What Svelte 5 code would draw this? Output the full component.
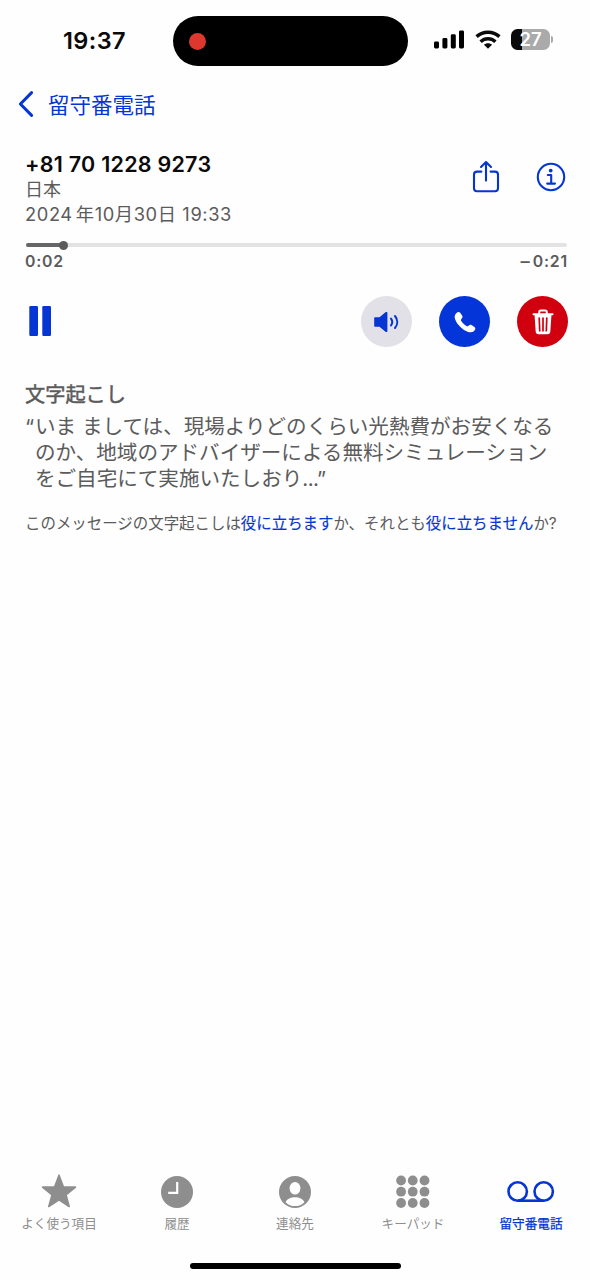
<script lang="ts">
	let elapsed = $state(2);
	let duration = $state(23);
	let playing = $state(true);
	let activeTab = $state('voicemail');

	const tabs = [
		{ id: 'favorites', label: 'よく使う項目' },
		{ id: 'recents', label: '履歴' },
		{ id: 'contacts', label: '連絡先' },
		{ id: 'keypad', label: 'キーパッド' },
		{ id: 'voicemail', label: '留守番電話' }
	];

	const dots = [4.5, 15.7, 27];

	function format(seconds: number) {
		return `${Math.floor(seconds / 60)}:${String(seconds % 60).padStart(2, '0')}`;
	}

	let progress = $derived((elapsed / duration) * 80.5);
</script>

<div class="phone">
	<header class="status">
		<div class="clock">19:37</div>
		<div class="island"><span class="rec"></span></div>
		<div class="indicators">
			<svg class="signal" width="30" height="19" viewBox="0 0 30 19">
				<rect x="0" y="11.5" width="5" height="7" rx="1.4" />
				<rect x="8.4" y="8" width="5" height="10.5" rx="1.4" />
				<rect x="16.8" y="4.3" width="5" height="14.2" rx="1.4" />
				<rect x="25" y="0.4" width="5" height="18.1" rx="1.4" />
			</svg>
			<svg class="wifi" width="26" height="19" viewBox="0 0 26 19">
				<path d="M1.6 6.6C8 .7 18 .7 24.4 6.6" />
				<path d="M5.6 11.7c4.3-3.9 10.5-3.9 14.8 0" />
				<path class="fill" d="M13 18.8l-4-4.1c2.2-2 5.8-2 8 0z" />
			</svg>
			<div class="battery"><span>27</span></div>
			<div class="nub"></div>
		</div>
	</header>

	<nav class="back">
		<svg width="16" height="28" viewBox="0 0 16 28">
			<path d="M13.6 2.6L2.4 14l11.2 11.4" />
		</svg>
		<span>留守番電話</span>
	</nav>

	<main>
		<section class="caller">
			<div class="who">
				<h1>+81 70 1228 9273</h1>
				<p class="region">日本</p>
				<p class="date">2024<i></i>年10月30日 19:33</p>
			</div>
			<div class="links">
				<svg width="28" height="34" viewBox="0 0 28 34">
					<path d="M9.4 11.6H5a3 3 0 0 0-3 3v13.6a3 3 0 0 0 3 3h18a3 3 0 0 0 3-3V14.6a3 3 0 0 0-3-3h-4.4" />
					<path d="M14 20.6V2.2M9 7l5-5 5 5" />
				</svg>
				<svg width="30" height="30" viewBox="0 0 30 30">
					<circle cx="15" cy="15" r="13.2" />
					<circle class="dot" cx="14.7" cy="8.6" r="1.9" />
					<path d="M11.8 13h3.4v8.4M11.2 21.6h7.8" />
				</svg>
			</div>
		</section>

		<div class="slider">
			<div class="played" style:width="{progress}%"></div>
			<div class="knob"></div>
		</div>
		<div class="times">
			<span>{format(elapsed)}</span>
			<span><span class="minus">−</span>{format(duration - elapsed)}</span>
		</div>

		<section class="controls">
			<button class="pause" aria-label="一時停止" onclick={() => (playing = !playing)}>
				<svg width="23" height="30" viewBox="0 0 23 30">
					{#if playing}
						<rect x="0.3" width="8.7" height="30" rx="1.2" />
						<rect x="13.3" width="8.7" height="30" rx="1.2" />
					{:else}
						<path d="M0 0l23 15L0 30z" />
					{/if}
				</svg>
			</button>
			<button class="round speaker" aria-label="スピーカー">
				<svg width="26" height="22" viewBox="0 0 26 22">
					<path class="fill" d="M1.3 6.3h4.2l6-5c.8-.7 1.9-.3 1.9.7v18c0 1-1.1 1.400-1.900.7l-6-5H1.300C.6 15.700.2 15.300.2 14.700V7.300c0-.6.4-1 1.100-1z" />
					<path d="M17 7.600c1.500 2 1.500 4.800 0 6.800M21 5c3 3.600 3 8.400 0 12" />
				</svg>
			</button>
			<button class="round call" aria-label="発信">
				<svg width="22" height="22" viewBox="0 0 22 22">
					<path d="M1.600 2.900C3 .9 5 .2 6.200 1.800l1.900 2.800c.8 1.300.5 2.100-.7 3.400-.6.700-.6 1.200-.1 2 1.300 2.100 3 3.700 5.200 5 .8.500 1.300.4 2-.2 1.200-1.100 2.200-1.300 3.400-.5l2.600 1.800c1.500 1.100 1 2.800-.7 4.200-1.900 1.500-5 1.300-8.900-.9C6.700 17 2.800 12.700 1.200 8.500.4 6.300.5 4.400 1.600 2.900z" />
				</svg>
			</button>
			<button class="round trash" aria-label="削除">
				<svg width="22" height="26" viewBox="0 0 22 26">
					<path class="lid" d="M1.500 5.200h19M7.200 5V3.200c0-1 .6-1.600 1.600-1.600h4.400c1 0 1.600.6 1.600 1.600V5" />
					<path class="bin" d="M2.500 5.500h17l-1.200 17.200c-.1 1.500-1.100 2.500-2.600 2.500H6.300c-1.500 0-2.500-1-2.600-2.500z" />
					<path class="slots" d="M7.200 9l.5 12.800M11 9v12.800M14.800 9l-.5 12.800" />
				</svg>
			</button>
		</section>

		<section class="transcript">
			<h2>文字起こし</h2>
			<div class="quote">
				<span class="open">“</span>
				<p>
					いま ましては、現場よりどのくらい光熱費がお安くなる<br />
					のか、地域のアドバイザーによる無料シミュレーション<br />
					をご自宅にて実施いたしおり<span class="end">...”</span>
				</p>
			</div>
			<p class="feedback">このメッセージの文字起こしは<a href="#yes">役に立ちます</a>か、それとも<a href="#no">役に立ちません</a>か?</p>
		</section>
	</main>

	<footer>
		{#each tabs as tab (tab.id)}
			<button class="tab" class:active={tab.id === activeTab} onclick={() => (activeTab = tab.id)}>
				<svg width="48" height="36" viewBox="0 0 48 36">
					{#if tab.id === 'favorites'}
						<path class="star" d="M24 1.2l4.35 11.700 12.100.25-9.400 7.850 3.100 11.500L24 25.900l-10.200 6.600 3.200-11.500-9.450-7.850 12.100-.25z" />
					{:else if tab.id === 'recents'}
						<circle cx="24" cy="18" r="16" />
						<path class="hands" d="M24.200 8v10.800h-9" />
					{:else if tab.id === 'contacts'}
						<circle cx="24" cy="18" r="16" />
						<ellipse class="cut" cx="24" cy="14.300" rx="5.400" ry="6.300" />
						<path class="cut" d="M14.600 28.200c1.400-3.400 5-5 9.400-5s8 1.600 9.400 5c-2.500 2.600-5.700 3.900-9.400 3.900s-6.900-1.300-9.400-3.900z" />
					{:else if tab.id === 'keypad'}
						{#each dots as y}
							{#each dots as x}
								<circle cx={x * 1.04 + 7.4} cy={y + 2} r="4.9" />
							{/each}
						{/each}
					{:else}
						<g class="reels">
							<circle cx="10.7" cy="17.5" r="9.2" />
							<circle cx="36.7" cy="17.5" r="9.2" />
							<path d="M10.7 26.7h26" />
						</g>
					{/if}
				</svg>
				<span>{tab.label}</span>
			</button>
		{/each}
	</footer>
	<div class="home"></div>
</div>

<style>
	:global(body) {
		background: #fefefe;
	}

	.phone {
		--blue: #0535d2;
		--gray: #5b5b5b;
		display: flex;
		flex-direction: column;
		box-sizing: border-box;
		width: 590px;
		height: 1280px;
		overflow: hidden;
		background: #fefefe;
		color: #0a0a0a;
		font-family: Inter, 'Noto Sans CJK JP', sans-serif;
	}

	h1,
	h2,
	p {
		margin: 0;
		white-space: nowrap;
	}

	svg {
		display: block;
		flex: none;
	}

	button {
		padding: 0;
		border: 0;
		background: none;
		font: inherit;
	}

	.status {
		display: flex;
		align-items: center;
		height: 50px;
		padding-top: 16px;
	}

	.clock {
		width: 110px;
		padding: 0 0 1px 63px;
		font-size: 23.5px;
		font-weight: 600;
		letter-spacing: 0.4px;
	}

	.island {
		display: flex;
		align-items: center;
		width: 219px;
		height: 50px;
		padding-left: 16px;
		border-radius: 25px;
		background: #000;
	}

	.rec {
		width: 17px;
		height: 17px;
		border-radius: 50%;
		background: #dc382e;
	}

	.indicators {
		display: flex;
		align-items: center;
		padding: 0 0 3px 26px;
	}

	.wifi {
		margin-left: 11px;
		fill: none;
		stroke: #0a0a0a;
		stroke-width: 3.5;
	}

	.wifi .fill {
		fill: #0a0a0a;
		stroke: none;
	}

	.battery {
		width: 39px;
		height: 21px;
		margin-left: 10px;
		border-radius: 6.5px;
		background: linear-gradient(90deg, #0a0a0a 27%, #aaa 27%);
		color: #fff;
		font-size: 18.5px;
		font-weight: 600;
		line-height: 21px;
		text-align: center;
	}

	.nub {
		width: 2px;
		height: 7px;
		margin-left: 1px;
		border-radius: 0 2px 2px 0;
		background: #aaa;
	}

	.back {
		display: flex;
		align-items: center;
		height: 76px;
		padding-left: 18px;
		color: var(--blue);
		font-size: 21.5px;
	}

	.back svg {
		margin-right: 14px;
		fill: none;
		stroke: var(--blue);
		stroke-width: 3;
		stroke-linecap: round;
		stroke-linejoin: round;
	}

	.back span {
		padding-bottom: 2px;
	}

	main {
		flex: 1;
		padding: 9px 22px 0 25px;
		color: var(--gray);
	}

	.caller {
		display: flex;
		justify-content: space-between;
	}

	h1 {
		height: 26px;
		color: #0a0a0a;
		font-size: 21.5px;
		font-weight: 600;
		line-height: 26px;
		letter-spacing: 0.25px;
	}

	.region {
		font-size: 18px;
		line-height: 25px;
	}

	.date {
		font-size: 18.3px;
		line-height: 24px;
		letter-spacing: 0.6px;
	}

	.date i {
		display: inline-block;
		width: 3px;
	}

	.links {
		display: flex;
		gap: 36px;
		padding: 9px 2px 0 0;
		fill: none;
		stroke: var(--blue);
		stroke-width: 2.1;
		stroke-linecap: round;
		stroke-linejoin: round;
	}

	.links svg:last-child {
		margin-top: 2px;
	}

	.links .dot {
		fill: var(--blue);
		stroke: none;
	}

	.slider {
		display: flex;
		align-items: center;
		height: 4px;
		margin: 17px 1px 0;
		border-radius: 2px;
		background: #e3e3e3;
	}

	.played {
		height: 4px;
		border-radius: 2px;
		background: #666;
	}

	.knob {
		width: 9px;
		height: 9px;
		margin-left: -5px;
		border-radius: 50%;
		background: #5b5b5b;
	}

	.times {
		display: flex;
		justify-content: space-between;
		margin-top: 5px;
		font-size: 15.8px;
		font-weight: 600;
		line-height: 20px;
		letter-spacing: 0.8px;
	}

	.minus {
		display: inline-block;
		margin-right: 1px;
		transform: scaleX(1.2);
	}

	.controls {
		display: flex;
		align-items: center;
		height: 51px;
		margin-top: 24px;
	}

	.pause {
		margin: 0 auto 0 4px;
		padding-bottom: 1px;
		fill: var(--blue);
	}

	.round {
		display: flex;
		align-items: center;
		justify-content: center;
		width: 51px;
		height: 51px;
		margin-left: 27px;
		border-radius: 50%;
	}

	.speaker {
		background: #e1e1e7;
		fill: none;
		stroke: var(--blue);
		stroke-width: 2;
		stroke-linecap: round;
	}

	.speaker .fill {
		fill: var(--blue);
		stroke: none;
	}

	.call {
		background: #0435d8;
		fill: #fff;
	}

	.trash {
		background: #d0000f;
		fill: none;
		stroke: #fff;
		stroke-width: 2;
		stroke-linecap: round;
	}

	.trash .bin {
		fill: #fff;
		stroke: none;
	}

	.trash .slots {
		stroke: #d0000f;
		stroke-width: 1.7;
	}

	h2 {
		margin-top: 35px;
		font-size: 20.2px;
		font-weight: 400;
		line-height: 26px;
		-webkit-text-stroke: 0.5px;
	}

	.quote {
		display: flex;
		margin-top: 6px;
		font-size: 20.57px;
		line-height: 26px;
	}

	.open {
		width: 10px;
	}

	.end {
		letter-spacing: -0.6px;
	}

	.feedback {
		margin-top: 21px;
		font-size: 15.45px;
		line-height: 22px;
	}

	.feedback a {
		color: var(--blue);
		text-decoration: none;
		-webkit-text-stroke: 0.15px;
	}

	footer {
		display: flex;
	}

	.tab {
		display: flex;
		flex: 1;
		flex-direction: column;
		align-items: center;
		color: #8e8e8e;
		fill: currentColor;
		font-size: 12.6px;
		line-height: 18px;
	}

	.tab span {
		margin-top: 5px;
	}

	.active {
		color: var(--blue);
	}

	.active span {
		-webkit-text-stroke: 0.25px;
	}

	.star {
		stroke: currentColor;
		stroke-width: 1.6;
		stroke-linejoin: round;
	}

	.hands {
		fill: none;
		stroke: #fefefe;
		stroke-width: 2.2;
	}

	.cut {
		fill: #fefefe;
	}

	.reels {
		fill: none;
		stroke: currentColor;
		stroke-width: 2.6;
	}

	.home {
		width: 211px;
		height: 6px;
		margin: 30px auto 11px;
		border-radius: 3px;
		background: #000;
	}
</style>
